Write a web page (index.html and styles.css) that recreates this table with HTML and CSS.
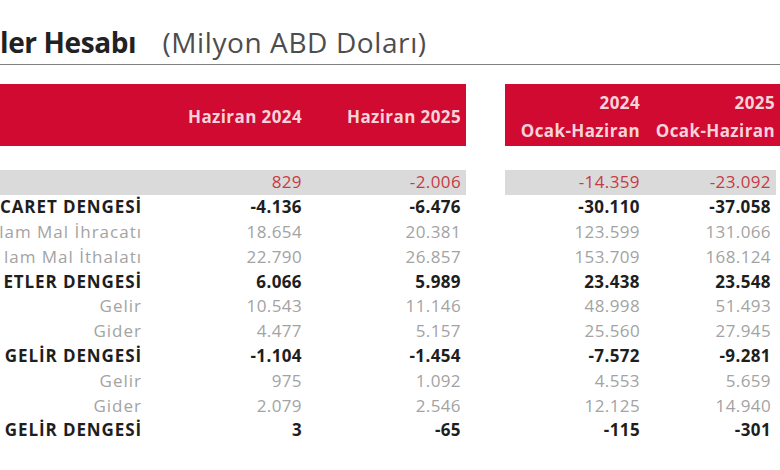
FILE: index.html
```html
<!DOCTYPE html>
<html lang="tr">
<head>
<meta charset="utf-8">
<title>Cari İşlemler Hesabı</title>
<link rel="stylesheet" href="styles.css">
</head>
<body>
<h1 class="title">
  <b class="title-main">ler Hesabı</b> <span class="title-unit">(Milyon ABD Doları)</span>
</h1>
<div class="tables">
  <div class="block block-left">
    <div class="head">
      <div class="label"></div>
      <div class="col c1">Haziran 2024</div>
      <div class="col c2">Haziran 2025</div>
    </div>
    <div class="body">
      <div class="row total"><div class="label"></div><div class="col c1">829</div><div class="col c2">-2.006</div></div>
      <div class="row strong"><div class="label">CARET DENGESİ</div><div class="col c1">-4.136</div><div class="col c2">-6.476</div></div>
      <div class="row sub"><div class="label">lam Mal İhracatı</div><div class="col c1">18.654</div><div class="col c2">20.381</div></div>
      <div class="row sub"><div class="label">lam Mal İthalatı</div><div class="col c1">22.790</div><div class="col c2">26.857</div></div>
      <div class="row strong"><div class="label">ETLER DENGESİ</div><div class="col c1">6.066</div><div class="col c2">5.989</div></div>
      <div class="row sub"><div class="label">Gelir</div><div class="col c1">10.543</div><div class="col c2">11.146</div></div>
      <div class="row sub"><div class="label">Gider</div><div class="col c1">4.477</div><div class="col c2">5.157</div></div>
      <div class="row strong"><div class="label">GELİR DENGESİ</div><div class="col c1">-1.104</div><div class="col c2">-1.454</div></div>
      <div class="row sub"><div class="label">Gelir</div><div class="col c1">975</div><div class="col c2">1.092</div></div>
      <div class="row sub"><div class="label">Gider</div><div class="col c1">2.079</div><div class="col c2">2.546</div></div>
      <div class="row strong"><div class="label">GELİR DENGESİ</div><div class="col c1">3</div><div class="col c2">-65</div></div>
    </div>
  </div>
  <div class="block block-right">
    <div class="head">
      <div class="col c3"><span>2024</span><span>Ocak-Haziran</span></div>
      <div class="col c4"><span>2025</span><span>Ocak-Haziran</span></div>
    </div>
    <div class="body">
      <div class="row total"><div class="col c3">-14.359</div><div class="col c4">-23.092</div></div>
      <div class="row strong"><div class="col c3">-30.110</div><div class="col c4">-37.058</div></div>
      <div class="row sub"><div class="col c3">123.599</div><div class="col c4">131.066</div></div>
      <div class="row sub"><div class="col c3">153.709</div><div class="col c4">168.124</div></div>
      <div class="row strong"><div class="col c3">23.438</div><div class="col c4">23.548</div></div>
      <div class="row sub"><div class="col c3">48.998</div><div class="col c4">51.493</div></div>
      <div class="row sub"><div class="col c3">25.560</div><div class="col c4">27.945</div></div>
      <div class="row strong"><div class="col c3">-7.572</div><div class="col c4">-9.281</div></div>
      <div class="row sub"><div class="col c3">4.553</div><div class="col c4">5.659</div></div>
      <div class="row sub"><div class="col c3">12.125</div><div class="col c4">14.940</div></div>
      <div class="row strong"><div class="col c3">-115</div><div class="col c4">-301</div></div>
    </div>
  </div>
</div>
</body>
</html>
```
FILE: styles.css
```css
html, body {
  margin: 0;
  padding: 0;
  background: #ffffff;
  overflow: hidden;
}
body {
  width: 780px;
  height: 470px;
  font-family: "Open Sans", "Liberation Sans", sans-serif;
}
.title {
  margin: 0;
  padding: 26px 0 6px 0;
  line-height: 32px;
  font-size: 28px;
  font-weight: 400;
  border-bottom: 1.5px solid #808080;
  white-space: nowrap;
}
.title-main {
  font-weight: 700;
  color: #222222;
  letter-spacing: -0.4px;
}
.title-unit {
  margin-left: 19px;
  color: #4d4d4d;
  letter-spacing: 0.6px;
}
.tables {
  display: flex;
  gap: 39px;
  margin-top: 18.5px;
}
.block {
  flex: none;
  font-size: 17px;
  letter-spacing: 0.4px;
}
.block-left {
  width: 466px;
}
.block-right {
  width: 275px;
}
.head {
  display: flex;
  align-items: center;
  height: 62px;
  box-sizing: border-box;
  padding: 4px 5px 0 0;
  background: #d10a31;
  color: #f6d3da;
  font-weight: 700;
}
.block-right .body {
  width: 271px;
}
.body {
  margin-top: 24.5px;
}
.row {
  display: flex;
  align-items: center;
  height: 24.8px;
  padding-right: 5px;
  line-height: 24px;
}
.label {
  width: 142px;
  flex: none;
  display: flex;
  justify-content: flex-end;
  white-space: nowrap;
}
.strong .label {
  letter-spacing: 0.9px;
}
.sub .label {
  letter-spacing: 1px;
}
.col {
  flex: none;
  text-align: right;
  white-space: nowrap;
}
.c1 { width: 160px; }
.c2 { width: 159px; }
.c3 { width: 135px; }
.c4 { width: 135px; }
.block-right .row .c4 { width: 131px; }
.head .c3, .head .c4 {
  display: flex;
  flex-direction: column;
  align-items: flex-end;
  line-height: 28px;
}
.total {
  background: #dadada;
  color: #c63a45;
}
.strong {
  font-weight: 700;
  color: #1e1e1e;
}
.sub {
  color: #a3a3a3;
}
```
